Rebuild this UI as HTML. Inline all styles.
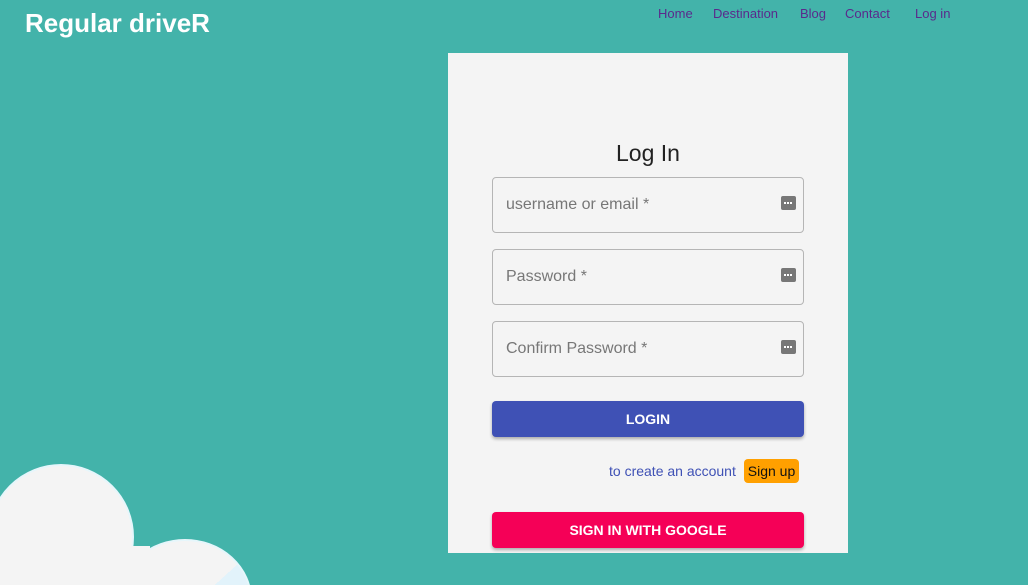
<!DOCTYPE html>
<html><head><meta charset="utf-8"><style>
*{margin:0;padding:0;box-sizing:border-box}
html{width:1028px;height:585px;overflow:hidden}
body{width:1028px;height:585px;background:#43b3aa;font-family:"Liberation Sans",sans-serif;position:relative;overflow:hidden}
.logo{position:absolute;left:25px;top:8px;color:#fff;font-size:26px;font-weight:bold}
.nav a{position:absolute;top:6px;font-size:13px;color:#5a2a8c;text-decoration:none}
.card{position:absolute;left:448px;top:53px;width:400px;height:500px;background:#f4f4f4}
h1{position:absolute;left:0;width:400px;top:87px;text-align:center;font-weight:normal;font-size:23px;color:#222}
.in{position:absolute;left:44px;width:312px;height:56px;border:1px solid #b5b5b5;border-radius:4px}
.in span{position:absolute;left:13px;top:18px;font-size:16px;color:#777}
.ic{position:absolute;right:7px;top:18px;width:15px;height:14px;background:#777;border-radius:2px}
.ic:before{content:"";position:absolute;left:3px;top:6px;width:2px;height:2px;background:#fff;box-shadow:3px 0 #fff,6px 0 #fff}
.btn{position:absolute;left:44px;width:312px;height:36px;border-radius:4px;color:#fff;font-weight:bold;font-size:14px;text-align:center;line-height:36px;box-shadow:0 2px 3px rgba(0,0,0,.3)}
svg{position:absolute;left:0;top:460px;display:block}
</style></head><body>
<div class="logo">Regular driveR</div>
<div class="nav"><a style="left:658px">Home</a><a style="left:713px">Destination</a><a style="left:800px">Blog</a><a style="left:845px">Contact</a><a style="left:915px">Log in</a></div>
<svg width="260" height="125" viewBox="0 0 260 125">
<defs><linearGradient id="g" x1="0" y1="0" x2="1" y2="1"><stop offset="0.55" stop-color="#f4f4f4"/><stop offset="0.55" stop-color="#e2f3fb"/></linearGradient></defs>
<circle cx="61" cy="77" r="72" fill="#f4f4f4" stroke="#e6f6fb" stroke-width="2"/>
<ellipse cx="185" cy="140" rx="66" ry="60" fill="url(#g)" stroke="#e6f6fb" stroke-width="2"/>
<rect x="0" y="86" width="150" height="39" fill="#f4f4f4"/>
</svg>
<div class="card">
<h1>Log In</h1>
<div class="in" style="top:124px"><span>username or email *</span><div class="ic"></div></div>
<div class="in" style="top:196px"><span>Password *</span><div class="ic"></div></div>
<div class="in" style="top:268px"><span>Confirm Password *</span><div class="ic"></div></div>
<div class="btn" style="top:348px;background:#3f51b5">LOGIN</div>
<div style="position:absolute;left:161px;top:410px;font-size:14px;color:#3f51b5">to create an account</div>
<div style="position:absolute;left:296px;top:406px;width:55px;height:24px;background:#ffa000;border-radius:4px;font-size:14px;line-height:24px;text-align:center;color:#111">Sign up</div>
<div class="btn" style="top:459px;background:#f50057">SIGN IN WITH GOOGLE</div>
</div>
</body></html>
